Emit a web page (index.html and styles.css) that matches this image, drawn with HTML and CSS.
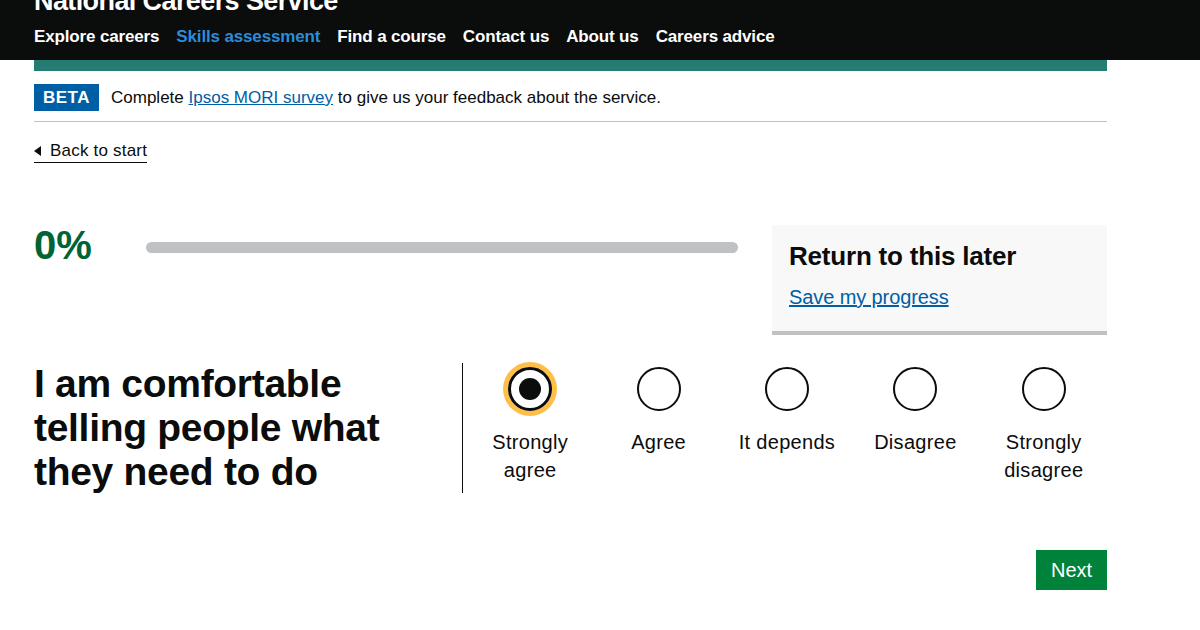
FILE: index.html
```html
<!DOCTYPE html>
<html lang="en">
<head>
<meta charset="UTF-8">
<title>Skills assessment - National Careers Service</title>
<link rel="stylesheet" href="styles.css">
</head>
<body>

<header class="site-header">
  <div class="wrap">
    <div class="site-title">National Careers Service</div>
    <nav class="site-nav">
      <a href="#">Explore careers</a>
      <a href="#" class="active">Skills assessment</a>
      <a href="#">Find a course</a>
      <a href="#">Contact us</a>
      <a href="#">About us</a>
      <a href="#">Careers advice</a>
    </nav>
  </div>
</header>

<div class="wrap">
  <div class="teal-bar"></div>

  <div class="phase-banner">
    <span class="phase-tag">BETA</span>
    <span class="phase-text">Complete <a href="#">Ipsos MORI survey</a> to give us your feedback about the service.</span>
  </div>

  <a href="#" class="back-link">Back to start</a>

  <div class="progress-row">
    <div class="progress-left">
      <span class="percent">0%</span>
      <div class="bar"></div>
    </div>
    <div class="return-box">
      <h2>Return to this later</h2>
      <a href="#">Save my progress</a>
    </div>
  </div>

  <div class="question">
    <h1>I am comfortable telling people what they need to do</h1>
    <div class="options">
      <label class="option">
        <span class="radio checked"></span>
        <span class="label">Strongly agree</span>
      </label>
      <label class="option">
        <span class="radio"></span>
        <span class="label">Agree</span>
      </label>
      <label class="option">
        <span class="radio"></span>
        <span class="label">It depends</span>
      </label>
      <label class="option">
        <span class="radio"></span>
        <span class="label">Disagree</span>
      </label>
      <label class="option">
        <span class="radio"></span>
        <span class="label">Strongly disagree</span>
      </label>
    </div>
  </div>

  <div class="actions">
    <button class="next-btn">Next</button>
  </div>
</div>

</body>
</html>
```

FILE: styles.css
```css
body {
  margin: 0;
  font-family: "Liberation Sans", Arial, sans-serif;
  color: #0b0c0c;
  background: #fff;
  overflow: hidden;
}

.wrap {
  width: 1073px;
  margin-left: 34px;
}

/* header */
.site-header {
  background: #0b0c0c;
  height: 60px;
  overflow: hidden;
}

.site-title {
  color: #fff;
  font-size: 27px;
  font-weight: bold;
  line-height: 30px;
  margin-top: -14px;
  letter-spacing: -0.6px;
}

.site-nav {
  display: flex;
  gap: 17px;
  margin-top: 11px;
}

.site-nav a {
  color: #fff;
  text-decoration: none;
  font-weight: bold;
  font-size: 17px;
  line-height: 20px;
  letter-spacing: -0.15px;
}

.site-nav a.active { color: #2b8cdc; }

.teal-bar {
  height: 11px;
  background: #257c73;
}

/* beta banner */
.phase-banner {
  display: flex;
  align-items: center;
  gap: 12px;
  padding: 13px 0 10px;
  border-bottom: 1px solid #bfc1c3;
}

.phase-tag {
  background: #005ea5;
  color: #fff;
  font-weight: bold;
  font-size: 17px;
  letter-spacing: 0.5px;
  padding: 4px 9px 3px;
  line-height: 20px;
}

.phase-text {
  font-size: 17px;
}

.phase-text a { color: #005ea5; }

.back-link {
  display: inline-block;
  margin-top: 17px;
  color: #0b0c0c;
  text-decoration: none;
  font-size: 17px;
  line-height: 23px;
  border-bottom: 1px solid #0b0c0c;
  padding-left: 16px;
  position: relative;
  letter-spacing: 0.2px;
}

.back-link::before {
  content: "";
  position: absolute;
  left: 0;
  top: 7px;
  border-style: solid;
  border-width: 5px 7px 5px 0;
  border-color: transparent #0b0c0c transparent transparent;
}

/* progress */
.progress-row {
  display: flex;
  justify-content: space-between;
  margin-top: 62px;
}

.progress-left {
  display: flex;
  align-items: center;
  gap: 55px;
  height: 36px;
  margin-top: 2px;
}

.percent {
  color: #006435;
  font-weight: bold;
  font-size: 40px;
  width: 57px;
}

.bar {
  width: 592px;
  height: 11px;
  border-radius: 6px;
  background: #bfc1c3;
  margin-top: 4px;
}

.return-box {
  width: 318px;
  height: 106px;
  background: #f8f8f8;
  border-bottom: 4px solid #bfc1c3;
  padding-left: 17px;
}

.return-box h2 {
  margin: 16px 0 0;
  font-size: 26px;
  line-height: 30px;
  letter-spacing: -0.2px;
}

.return-box a {
  display: inline-block;
  margin-top: 15px;
  color: #005ea5;
  font-size: 20px;
  letter-spacing: -0.1px;
}

/* question */
.question {
  display: flex;
  margin-top: 28px;
}

.question h1 {
  flex: 0 0 auto;
  width: 429px;
  margin: 0 3px 0 0;
  font-size: 39px;
  line-height: 44px;
  letter-spacing: -0.3px;
  border-right: 1px solid #0b0c0c;
  height: 130px;
  box-sizing: border-box;
  padding-right: 20px;
  align-self: flex-start;
  display: flex;
  align-items: center;
}

.options {
  display: flex;
  flex: 0 0 auto;
}

.option {
  width: 128.4px;
  display: flex;
  flex-direction: column;
  align-items: center;
  text-align: center;
}

.radio {
  width: 44px;
  height: 44px;
  border: 2px solid #0b0c0c;
  border-radius: 50%;
  box-sizing: border-box;
  margin-top: 4px;
  position: relative;
}

.radio.checked {
  border-width: 3px;
  box-shadow: 0 0 0 5px #ffbf47;
}

.radio.checked::after {
  content: "";
  position: absolute;
  left: 8px;
  top: 8px;
  width: 22px;
  height: 22px;
  border-radius: 50%;
  background: #0b0c0c;
}

.label {
  margin-top: 17px;
  font-size: 20px;
  line-height: 28px;
  width: 110px;
  letter-spacing: 0.3px;
}

.actions {
  display: flex;
  justify-content: flex-end;
  margin-top: 57px;
}

.next-btn {
  background: #00823b;
  color: #fff;
  border: none;
  box-shadow: 0 2px 0 #003618;
  font-family: inherit;
  font-size: 20px;
  padding: 9px 13px 10px;
  width: 71px;
  height: 40px;
}
```
